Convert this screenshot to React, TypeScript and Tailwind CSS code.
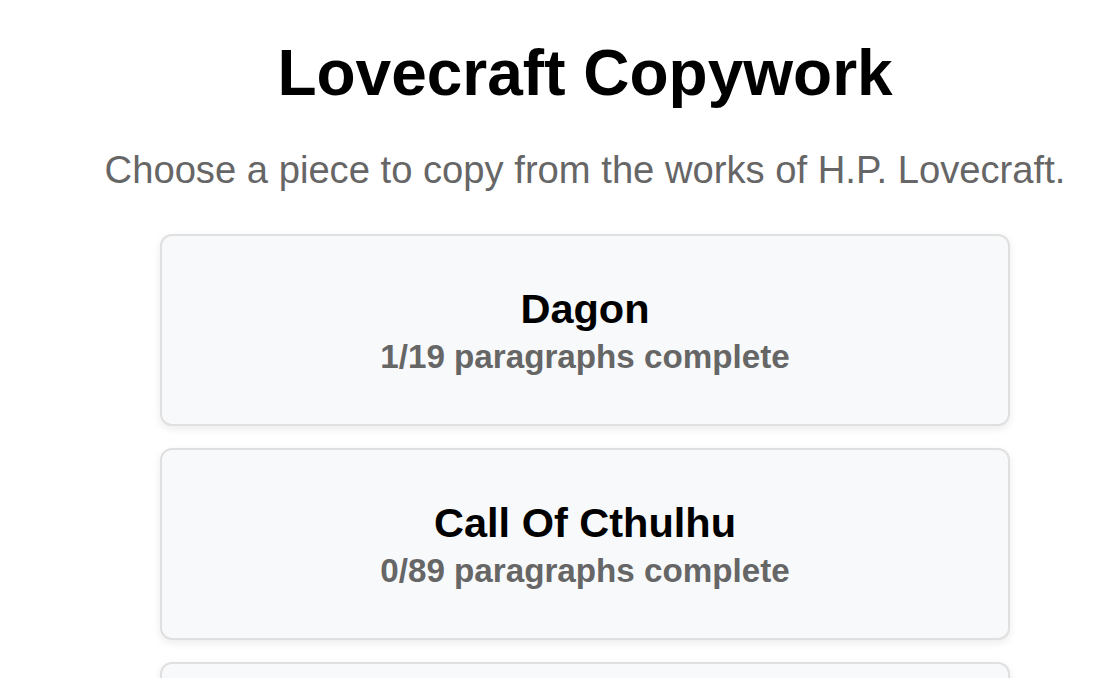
const PIECES = [
  { title: 'Dagon', done: 1, total: 19 },
  { title: 'Call Of Cthulhu', done: 0, total: 89 },
  { title: 'The Colour Out Of Space', done: 0, total: 104 },
  { title: 'The Music Of Erich Zann', done: 0, total: 31 },
];

export default function App() {
  return (
    <div className="min-h-screen bg-white pl-[50px] font-['Liberation_Sans',Arial,sans-serif]">
      <div className="flex flex-col items-center pt-9">
        <h1 className="text-[64px] leading-[74px] font-bold text-black">Lovecraft Copywork</h1>
        <p className="mt-[38px] text-[38.2px] leading-[44px] text-[#666]">
          Choose a piece to copy from the works of H.P. Lovecraft.
        </p>

        <div className="mt-[42px] flex flex-col gap-[22px]">
          {PIECES.map((piece) => (
            <button
              key={piece.title}
              className="w-[850px] h-[192px] flex flex-col items-center justify-center pt-[4px] rounded-xl border-2 border-[#e0e0e0] bg-[#f8f9fa] shadow-[0_3px_8px_rgba(0,0,0,0.08)] hover:bg-[#f0f1f3] transition-colors"
            >
              <span className="text-[41.5px] leading-[50px] font-bold text-black">{piece.title}</span>
              <span className="text-[33.2px] leading-[46px] font-bold text-[#666]">
                {piece.done}/{piece.total} paragraphs complete
              </span>
            </button>
          ))}
        </div>
      </div>
    </div>
  );
}
